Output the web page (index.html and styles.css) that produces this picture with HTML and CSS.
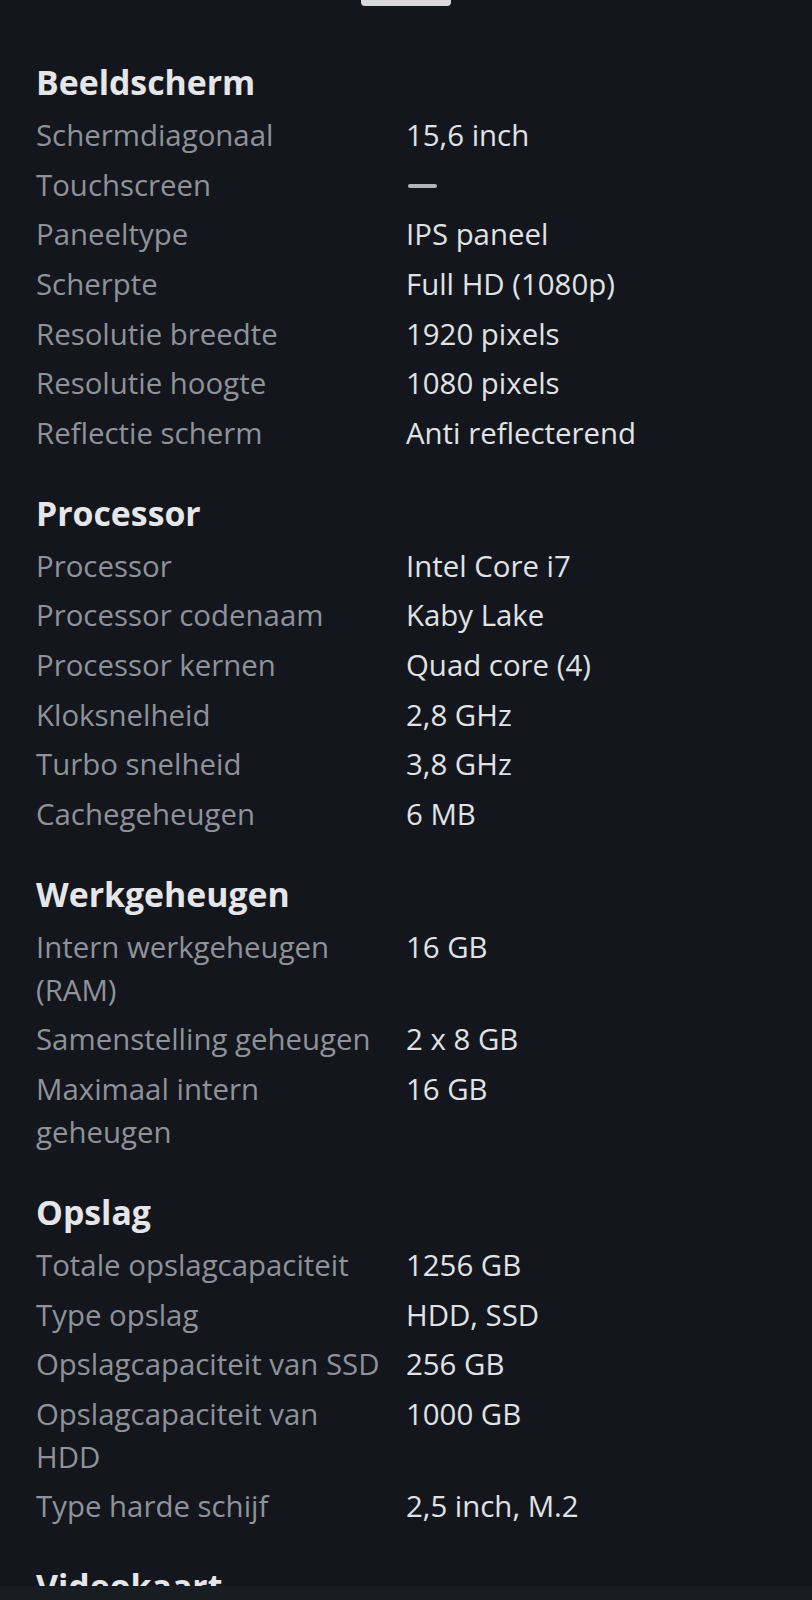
FILE: index.html
```html
<!DOCTYPE html>
<html lang="nl">
<head>
<meta charset="utf-8">
<title>Specificaties</title>
<link rel="stylesheet" href="styles.css">
</head>
<body>
<div class="handle"></div>
<main class="specs">
  <section class="group">
    <h2 class="group-title">Beeldscherm</h2>
    <dl class="rows">
      <div class="row"><dt>Schermdiagonaal</dt><dd>15,6 inch</dd></div>
      <div class="row"><dt>Touchscreen</dt><dd><span class="dash"></span></dd></div>
      <div class="row"><dt>Paneeltype</dt><dd>IPS paneel</dd></div>
      <div class="row"><dt>Scherpte</dt><dd>Full HD (1080p)</dd></div>
      <div class="row"><dt>Resolutie breedte</dt><dd>1920 pixels</dd></div>
      <div class="row"><dt>Resolutie hoogte</dt><dd>1080 pixels</dd></div>
      <div class="row"><dt>Reflectie scherm</dt><dd>Anti reflecterend</dd></div>
    </dl>
  </section>
  <section class="group">
    <h2 class="group-title">Processor</h2>
    <dl class="rows">
      <div class="row"><dt>Processor</dt><dd>Intel Core i7</dd></div>
      <div class="row"><dt>Processor codenaam</dt><dd>Kaby Lake</dd></div>
      <div class="row"><dt>Processor kernen</dt><dd>Quad core (4)</dd></div>
      <div class="row"><dt>Kloksnelheid</dt><dd>2,8 GHz</dd></div>
      <div class="row"><dt>Turbo snelheid</dt><dd>3,8 GHz</dd></div>
      <div class="row"><dt>Cachegeheugen</dt><dd>6 MB</dd></div>
    </dl>
  </section>
  <section class="group">
    <h2 class="group-title">Werkgeheugen</h2>
    <dl class="rows">
      <div class="row"><dt>Intern werkgeheugen (RAM)</dt><dd>16 GB</dd></div>
      <div class="row"><dt>Samenstelling geheugen</dt><dd>2 x 8 GB</dd></div>
      <div class="row"><dt>Maximaal intern geheugen</dt><dd>16 GB</dd></div>
    </dl>
  </section>
  <section class="group">
    <h2 class="group-title">Opslag</h2>
    <dl class="rows">
      <div class="row"><dt>Totale opslagcapaciteit</dt><dd>1256 GB</dd></div>
      <div class="row"><dt>Type opslag</dt><dd>HDD, SSD</dd></div>
      <div class="row"><dt>Opslagcapaciteit van SSD</dt><dd>256 GB</dd></div>
      <div class="row"><dt>Opslagcapaciteit van HDD</dt><dd>1000 GB</dd></div>
      <div class="row"><dt>Type harde schijf</dt><dd>2,5 inch, M.2</dd></div>
    </dl>
  </section>
  <section class="group">
    <h2 class="group-title">Videokaart</h2>
    <dl class="rows">
      <div class="row"><dt>Videokaart</dt><dd>NVIDIA GeForce GTX 1050</dd></div>
      <div class="row"><dt>Videogeheugen</dt><dd>4 GB</dd></div>
    </dl>
  </section>
</main>
<div class="bottom-bar"></div>
</body>
</html>
```

FILE: styles.css
```css
html, body {
  margin: 0;
  padding: 0;
  background: #13171d;
}

body {
  font-family: "Open Sans", "Noto Sans", sans-serif;
  color: #e3e4e6;
}

.handle {
  width: 90px;
  height: 6px;
  margin: 0 auto;
  background: #d9d9dc;
  border-radius: 0 0 4px 4px;
}

.specs {
  padding: 54px 36px 200px;
  display: flex;
  flex-direction: column;
  gap: 32.4px;
}

.group-title {
  margin: 0 0 7px;
  font-size: 33.8px;
  line-height: 44px;
  font-weight: 700;
  color: #e6e6e8;
}

.rows {
  margin: 0;
}

.row {
  display: grid;
  grid-template-columns: 370px 1fr;
  padding: 3.3px 0;
  font-size: 29.4px;
  line-height: 43px;
}

.row dt {
  color: #8f9298;
  padding-right: 24px;
}

.row dd {
  margin: 0;
  color: #e1e2e4;
  display: flex;
  align-items: flex-start;
}

.dash {
  display: block;
  width: 29px;
  height: 4px;
  margin: 20px 0 0 2px;
  border-radius: 2px;
  background: #b4b5b8;
}

.bottom-bar {
  position: fixed;
  left: 0;
  right: 0;
  bottom: 0;
  height: 14px;
  background: #181c23;
}
```
